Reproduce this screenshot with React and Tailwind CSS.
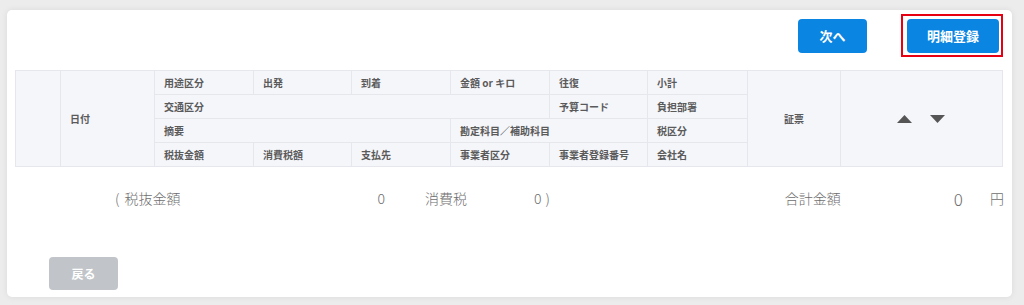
import React from "react";

const cell = "bg-[#f5f6fa] flex items-center pl-[9px] text-[10px] font-bold text-[#5a5a5a]";

const Detail = () => {
  return (
    <div
      className="w-[1024px] h-[305px] bg-[#ececec] pt-[10px] pl-[7px]"
      style={{ fontFamily: '"Noto Sans CJK JP", "Noto Sans", sans-serif' }}
    >
      <div className="w-[1005px] h-[287px] bg-white rounded-[5px] shadow-[0_0_6px_rgba(0,0,0,0.08)] flex flex-col">
        {/* top buttons */}
        <div className="flex justify-end items-center gap-[34px] pt-[4px] pr-[9px]">
          <button className="w-[69px] h-[34px] rounded-[4px] bg-[#0b85e2] text-white text-[13px] font-bold">
            次へ
          </button>
          <div className="border-2 border-[#e60012] pt-[3px] pb-[2px] pl-[4px] pr-[2px]">
            <button className="block w-[92px] h-[34px] rounded-[4px] bg-[#0b85e2] text-white text-[13px] font-bold">
              明細登録
            </button>
          </div>
        </div>

        {/* header table */}
        <div className="ml-[8px] mt-[13px] w-[988px] grid grid-cols-[44px_93px_98px_97px_98px_98px_97px_99px_92px_1fr] grid-rows-[repeat(4,23px)] gap-px p-px bg-[#e5e7ec]">
          <div className={`${cell} row-span-4 col-start-1 row-start-1`} />
          <div className={`${cell} row-span-4 col-start-2 row-start-1`}>日付</div>

          <div className={`${cell} col-start-3 row-start-1`}>用途区分</div>
          <div className={`${cell} col-start-4 row-start-1`}>出発</div>
          <div className={`${cell} col-start-5 row-start-1`}>到着</div>
          <div className={`${cell} col-start-6 row-start-1`}>金額 or キロ</div>
          <div className={`${cell} col-start-7 row-start-1`}>往復</div>
          <div className={`${cell} col-start-8 row-start-1`}>小計</div>

          <div className={`${cell} col-start-3 col-span-4 row-start-2`}>交通区分</div>
          <div className={`${cell} col-start-7 row-start-2`}>予算コード</div>
          <div className={`${cell} col-start-8 row-start-2`}>負担部署</div>

          <div className={`${cell} col-start-3 col-span-3 row-start-3`}>摘要</div>
          <div className={`${cell} col-start-6 col-span-2 row-start-3`}>勘定科目／補助科目</div>
          <div className={`${cell} col-start-8 row-start-3`}>税区分</div>

          <div className={`${cell} col-start-3 row-start-4`}>税抜金額</div>
          <div className={`${cell} col-start-4 row-start-4`}>消費税額</div>
          <div className={`${cell} col-start-5 row-start-4`}>支払先</div>
          <div className={`${cell} col-start-6 row-start-4`}>事業者区分</div>
          <div className={`${cell} col-start-7 row-start-4`}>事業者登録番号</div>
          <div className={`${cell} col-start-8 row-start-4`}>会社名</div>

          <div className={`${cell} row-span-4 col-start-9 row-start-1 justify-center !pl-0`}>証票</div>
          <div className="bg-[#f5f6fa] row-span-4 col-start-10 row-start-1 flex items-center justify-center gap-[18px] pr-[2px]">
            <svg width="15" height="8" viewBox="0 0 15 8">
              <path d="M7.5 0 L15 8 L0 8 Z" fill="#555" />
            </svg>
            <svg width="15" height="8" viewBox="0 0 15 8">
              <path d="M0 0 L15 0 L7.5 8 Z" fill="#555" />
            </svg>
          </div>
        </div>

        {/* totals */}
        <div className="mt-[21px] h-[20px] flex items-center text-[14px] text-[#6e6e6e] font-light leading-none">
          <span className="ml-[108px]">(</span>
          <span className="ml-[5px]">税抜金額</span>
          <span className="ml-[197px]">0</span>
          <span className="ml-[40px]">消費税</span>
          <span className="ml-[67px]">0</span>
          <span className="ml-[4px]">)</span>
          <span className="ml-[235px]">合計金額</span>
          <span className="ml-[113px] text-[17px]">0</span>
          <span className="ml-[27px]">円</span>
        </div>

        <div className="mt-[49px] ml-[42px]">
          <button className="w-[69px] h-[33px] rounded-[4px] bg-[#c1c5c9] text-white text-[12px] font-bold">
            戻る
          </button>
        </div>
      </div>
    </div>
  );
};

export default function App() {
  return <Detail />;
}
